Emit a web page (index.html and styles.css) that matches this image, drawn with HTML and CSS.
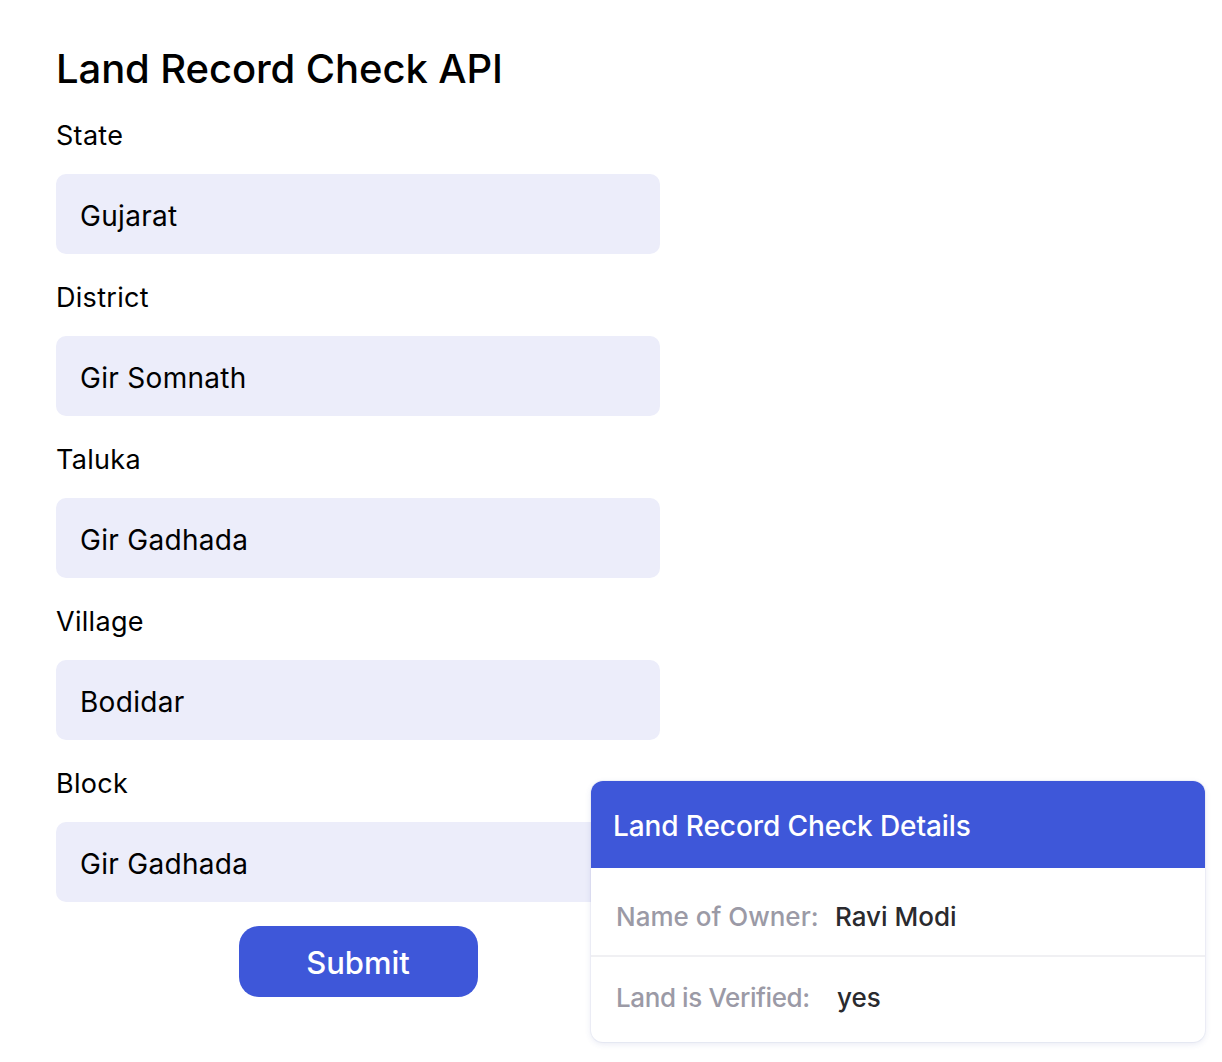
FILE: index.html
```html
<!DOCTYPE html>
<html lang="en">
<head>
<meta charset="utf-8">
<title>Land Record Check API</title>
<link rel="stylesheet" href="styles.css">
</head>
<body>
<main class="page">
  <h1 class="title">Land Record Check API</h1>
  <form class="form">
    <div class="field">
      <label class="label">State</label>
      <div class="input">Gujarat</div>
    </div>
    <div class="field">
      <label class="label">District</label>
      <div class="input">Gir Somnath</div>
    </div>
    <div class="field">
      <label class="label">Taluka</label>
      <div class="input">Gir Gadhada</div>
    </div>
    <div class="field">
      <label class="label">Village</label>
      <div class="input">Bodidar</div>
    </div>
    <div class="field">
      <label class="label">Block</label>
      <div class="input">Gir Gadhada</div>
    </div>
    <div class="actions">
      <button type="button" class="submit">Submit</button>
    </div>
  </form>
</main>
<section class="result-card">
  <header class="result-head">Land Record Check Details</header>
  <div class="result-row first">
    <span class="result-key">Name of Owner:</span>
    <span class="result-val">Ravi Modi</span>
  </div>
  <div class="result-row">
    <span class="result-key narrow">Land is Verified:</span>
    <span class="result-val">yes</span>
  </div>
</section>
</body>
</html>
```
FILE: styles.css
```css
html, body {
  margin: 0;
  padding: 0;
  background: #ffffff;
}
body {
  font-family: Inter, "Noto Sans", "Liberation Sans", sans-serif;
  color: #000;
  position: relative;
  min-height: 1062px;
}
.page {
  width: 604px;
  padding: 45px 0 0 56px;
}
.title {
  margin: 0;
  font-size: 40px;
  line-height: 48px;
  font-weight: 500;
  letter-spacing: -0.1px;
  color: #000;
}
.form {
  display: flex;
  flex-direction: column;
}
.field {
  display: flex;
  flex-direction: column;
}
.label {
  display: block;
  margin: 26px 0 21px;
  font-size: 27px;
  line-height: 34px;
  font-weight: 400;
  letter-spacing: 0.3px;
}
.field + .field .label {
  margin-top: 27px;
}
.input {
  height: 80px;
  box-sizing: border-box;
  background: #ecedfa;
  border-radius: 10px;
  padding: 3px 24px 0;
  display: flex;
  align-items: center;
  font-size: 28px;
  letter-spacing: 0.3px;
  color: #000;
}
.actions {
  display: flex;
  justify-content: center;
  padding-top: 24px;
}
.submit {
  width: 239px;
  height: 71px;
  border: 0;
  border-radius: 20px;
  background: #3e57d9;
  color: #fff;
  font-family: inherit;
  font-size: 31px;
  font-weight: 500;
  letter-spacing: 0;
  padding-top: 2px;
  cursor: pointer;
}
.result-card {
  position: absolute;
  left: 591px;
  top: 781px;
  width: 614px;
  background: #fff;
  border-radius: 12px;
  overflow: hidden;
  box-shadow: 0 2px 6px rgba(60, 70, 160, 0.12), 0 0 0 1px rgba(60, 70, 160, 0.05);
}
.result-head {
  height: 87px;
  background: #3e57d9;
  color: #fff;
  display: flex;
  align-items: center;
  padding: 3px 0 0 22px;
  box-sizing: border-box;
  font-size: 28px;
  font-weight: 500;
  letter-spacing: -0.1px;
}
.result-row {
  height: 87px;
  box-sizing: border-box;
  display: grid;
  grid-template-columns: 219px auto;
  align-items: center;
  padding: 0 0 4px 25px;
  font-size: 26px;
  letter-spacing: 0;
}
.result-row.first {
  padding: 9px 0 0 25px;
}
.result-row + .result-row {
  border-top: 2px solid #f0f0f3;
}
.result-row + .result-row .result-val {
  padding-left: 2px;
}
.result-key {
  color: #9b9aa6;
  font-weight: 500;
}
.result-key.narrow {
  letter-spacing: -0.4px;
}
.result-val {
  color: #2a2a2e;
  font-weight: 500;
}
```
